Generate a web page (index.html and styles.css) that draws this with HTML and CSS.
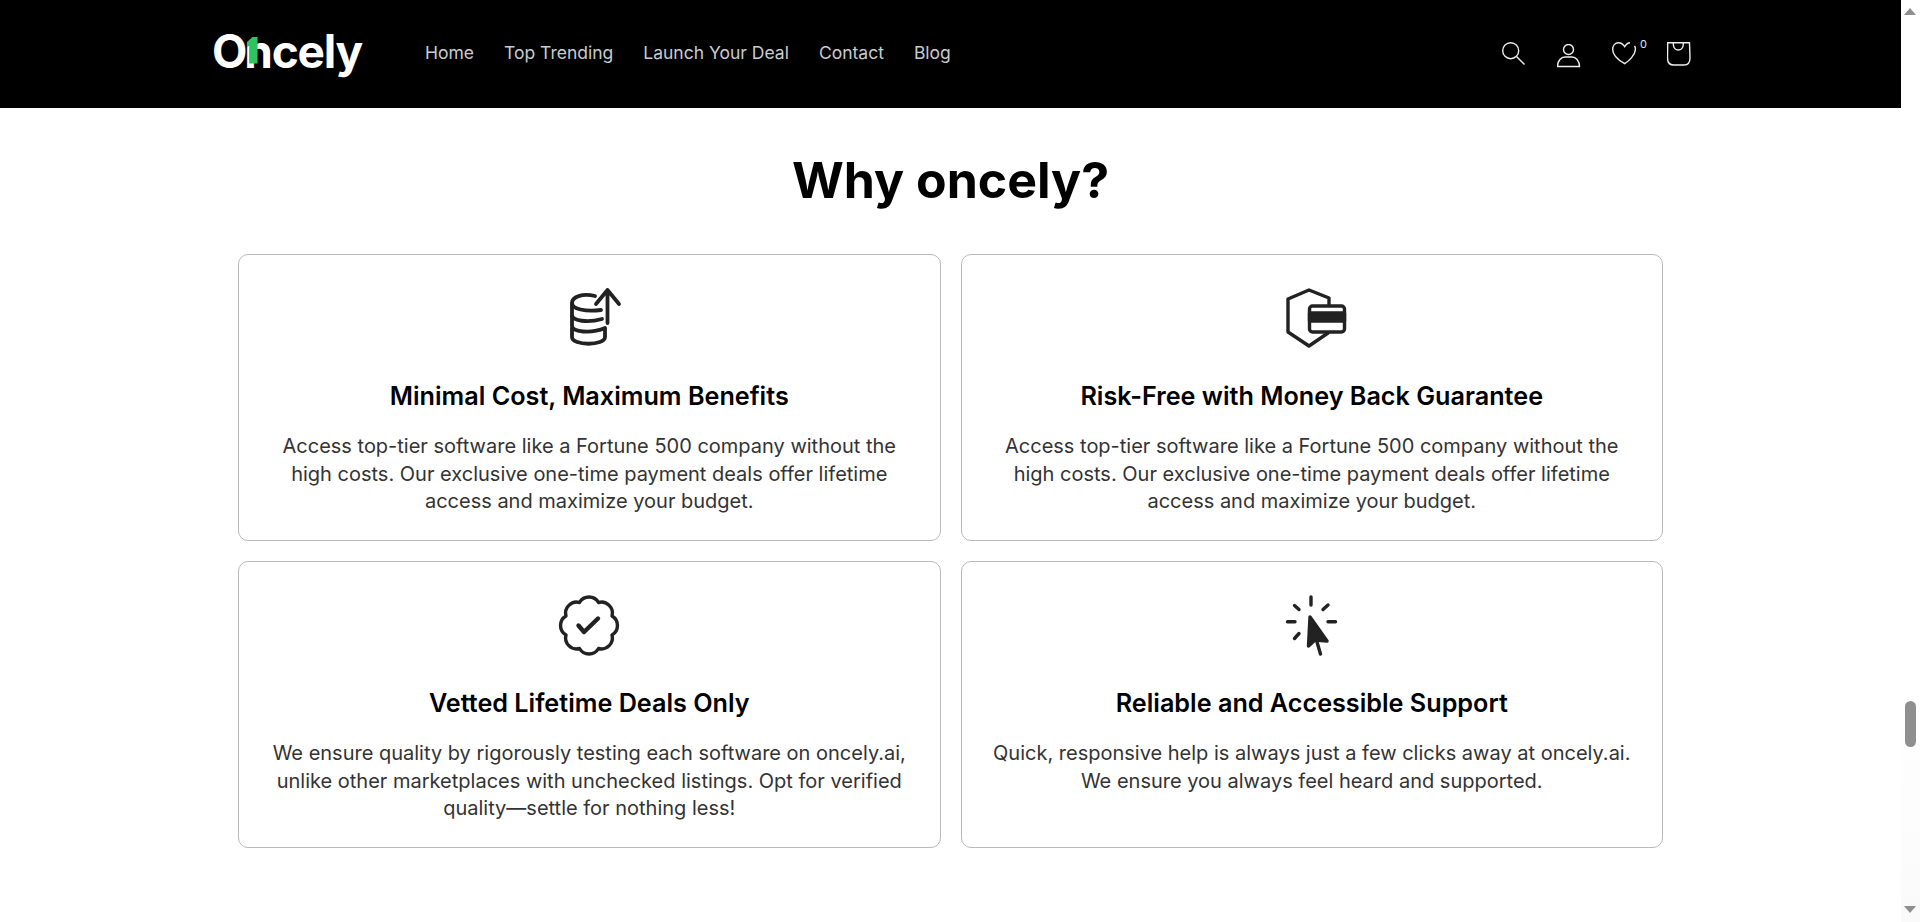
FILE: index.html
```html
<!DOCTYPE html>
<html lang="en">
<head>
    <meta charset="UTF-8">
    <meta name="viewport" content="width=device-width, initial-scale=1.0">
    <title>Why oncely?</title>
    <link rel="stylesheet" href="styles.css">
</head>
<body>
    <div class="page">
        <header class="site-header">
            <a class="logo" href="#"><span class="logo-o">O</span>ncely<span class="logo-one"></span></a>
            <nav class="main-nav">
                <a href="#">Home</a>
                <a href="#">Top Trending</a>
                <a href="#">Launch Your Deal</a>
                <a href="#">Contact</a>
                <a href="#">Blog</a>
            </nav>
            <div class="header-icons">
                <svg class="header-icon" viewBox="0 0 24 24"><circle cx="8.7" cy="8.7" r="8"/><path d="M14.5 14.5L22.5 22.5"/></svg>
                <svg class="header-icon icon-user" viewBox="0 0 24 24"><circle cx="11.5" cy="5.5" r="5"/><path d="M.5 22.5C.5 17 4 13 8 13H15C19 13 22.5 17 22.5 22.5Z"/></svg>
                <span class="wishlist">
                    <svg class="header-icon" viewBox="0 0 24 24"><path d="M18 .7C15.5 .7 14 2.5 12.7 4.7C11 2 9 .7 6.5 .7C3 .7 .7 3.5 .7 7.5C.7 13 7 18.5 12.7 21.7C17 19 23.2 13 23.4 7.5C23.5 6 23.2 5 22.5 4"/></svg>
                    <span class="wishlist-count">0</span>
                </span>
                <svg class="header-icon" viewBox="0 0 24 24"><path d="M.7 .7H22.5L23 16C23 20 21 23 17 23H6.5C2.5 23 .5 20 .5 16Z"/><path d="M6.3 .7V2C6.3 10 16.3 10 16.3 2V.7"/></svg>
            </div>
        </header>

        <main class="why-section">
            <h1>Why oncely?</h1>
            <div class="why-grid">
                <div class="why-card">
                    <svg class="why-icon icon-heavy" viewBox="-2 -1 100 90">
                        <path d="M54 25C41 22 31 26 31 32C31 38 44 41 60 39"/>
                        <path d="M31 33V44C31 50 47 52 61 48"/>
                        <path d="M31 45V55C31 61 50 63 64 57"/>
                        <path d="M31 57V66C31 75 64 75 64 66V58"/>
                        <path d="M66.5 52V19M55 33L66.5 19L78 33"/>
                    </svg>
                    <h3>Minimal Cost, Maximum Benefits</h3>
                    <p>Access top-tier software like a Fortune 500 company without the high costs. Our exclusive one-time payment deals offer lifetime access and maximize your budget.</p>
                </div>
                <div class="why-card">
                    <svg class="why-icon" viewBox="-3 -1 100 90">
                        <path d="M64 33V27L44 19L23 28V61L44 75L63 62"/>
                        <rect x="44.5" y="35" width="35" height="26" rx="3"/>
                        <path class="icon-band" d="M44.5 42H79.5V50H44.5Z"/>
                    </svg>
                    <h3>Risk-Free with Money Back Guarantee</h3>
                    <p>Access top-tier software like a Fortune 500 company without the high costs. Our exclusive one-time payment deals offer lifetime access and maximize your budget.</p>
                </div>
                <div class="why-card">
                    <svg class="why-icon" viewBox="0 -4 100 90">
                        <path d="M59.5 21.5A11 11 0 0 1 73 35A11 11 0 0 1 73 54A11 11 0 0 1 59.5 67.5A11 11 0 0 1 40.5 67.5A11 11 0 0 1 27 54A11 11 0 0 1 27 35A11 11 0 0 1 40.5 21.5A11 11 0 0 1 59.5 21.5Z"/>
                        <path class="icon-check" d="M39.5 44.5L45 51L59 37.5"/>
                    </svg>
                    <h3>Vetted Lifetime Deals Only</h3>
                    <p>We ensure quality by rigorously testing each software on oncely.ai, unlike other marketplaces with unchecked listings. Opt for verified quality—settle for nothing less!</p>
                </div>
                <div class="why-card">
                    <svg class="why-icon" viewBox="-3 -4 100 90">
                        <path d="M46 16V24M29.5 24.5L34 28.5M63 24L58 28.5M22.5 40.7H30M63 40.7H70.5M34 52.5L29.5 57.5"/>
                        <path class="icon-solid" d="M45 36L43.5 65L50 59L62 60Z"/>
                        <path d="M52 61L55.5 73"/>
                    </svg>
                    <h3>Reliable and Accessible Support</h3>
                    <p>Quick, responsive help is always just a few clicks away at oncely.ai. We ensure you always feel heard and supported.</p>
                </div>
            </div>
        </main>
    </div>

    <div class="scrollbar">
        <span class="scroll-arrow-up"></span>
        <span class="scroll-thumb"></span>
        <span class="scroll-arrow-down"></span>
    </div>
</body>
</html>
```

FILE: styles.css
```css
/* Base Styles */
* {
    margin: 0;
    padding: 0;
    box-sizing: border-box;
}

html,
body {
    height: 922px;
    overflow: hidden;
}

body {
    font-family: 'Inter', sans-serif;
    background-color: #fff;
    display: flex;
}

.page {
    flex: 1;
    min-width: 0;
}

/* Header */
.site-header {
    height: 108px;
    background-color: #000;
    display: flex;
    align-items: center;
    padding: 0 210px 0 212px;
}

.logo {
    position: relative;
    font-size: 46px;
    font-weight: 700;
    letter-spacing: -1.2px;
    color: #fff;
    text-decoration: none;
    margin-right: 63px;
    margin-bottom: 7px;
}

.logo-o {
    letter-spacing: -3.2px;
}

.logo-one {
    position: absolute;
    left: 35px;
    top: 14px;
    width: 12px;
    height: 27px;
    background-color: #2fc35f;
    clip-path: polygon(0 20%, 50% 0, 88% 0, 88% 100%, 18% 100%, 18% 34%, 0 40%);
}

.main-nav {
    display: flex;
    gap: 30px;
    flex: 1;
    margin-bottom: 3px;
}

.main-nav a {
    font-size: 17.5px;
    color: #c8ccd0;
    text-decoration: none;
}

.header-icons {
    display: flex;
    align-items: center;
    gap: 31px;
}

.header-icon {
    display: block;
    width: 24px;
    height: 24px;
    fill: none;
    stroke: #eee;
    stroke-width: 1.4;
}

.icon-user {
    margin-top: 4px;
}

.wishlist {
    position: relative;
}

.wishlist-count {
    position: absolute;
    left: 28px;
    top: -5px;
    font-size: 11px;
    color: #dbeafe;
}

/* Why section */
.why-section {
    padding-top: 41px;
}

.why-section h1 {
    font-size: 50px;
    font-weight: 700;
    line-height: 63px;
    text-align: center;
    color: #000;
    margin-bottom: 42px;
}

.why-grid {
    width: 1425px;
    margin: 0 auto;
    display: grid;
    grid-template-columns: 1fr 1fr;
    gap: 20px;
}

.why-card {
    height: 287px;
    border: 1px solid #b9b9b9;
    border-radius: 10px;
    padding: 15px 30px 0;
    text-align: center;
}

.why-icon {
    display: block;
    width: 100px;
    height: 90px;
    margin: 0 auto 20px;
    fill: none;
    stroke: #222;
    stroke-width: 3.4;
    stroke-linecap: round;
    stroke-linejoin: round;
}

.icon-heavy {
    stroke-width: 3.8;
}

.icon-check {
    stroke-width: 4.4;
}

.icon-band,
.icon-solid {
    fill: #222;
}

.why-card h3 {
    font-size: 25.2px;
    font-weight: 600;
    line-height: 33px;
    color: #000;
    margin-bottom: 20px;
}

.why-card p {
    font-size: 20px;
    line-height: 27.5px;
    color: #333;
}

/* Scrollbar */
.scrollbar {
    position: relative;
    width: 19px;
    background: linear-gradient(#fff, #fff 700px, #fafafa);
}

.scroll-thumb {
    position: absolute;
    left: 4px;
    top: 701px;
    width: 11px;
    height: 46px;
    border-radius: 6px;
    background-color: #8f8f8f;
}

.scroll-arrow-up,
.scroll-arrow-down {
    position: absolute;
    left: 3px;
    border-left: 6.5px solid transparent;
    border-right: 6.5px solid transparent;
}

.scroll-arrow-up {
    top: 8px;
    border-bottom: 7px solid #8f8f8f;
}

.scroll-arrow-down {
    top: 906px;
    border-top: 7px solid #8f8f8f;
}
```
